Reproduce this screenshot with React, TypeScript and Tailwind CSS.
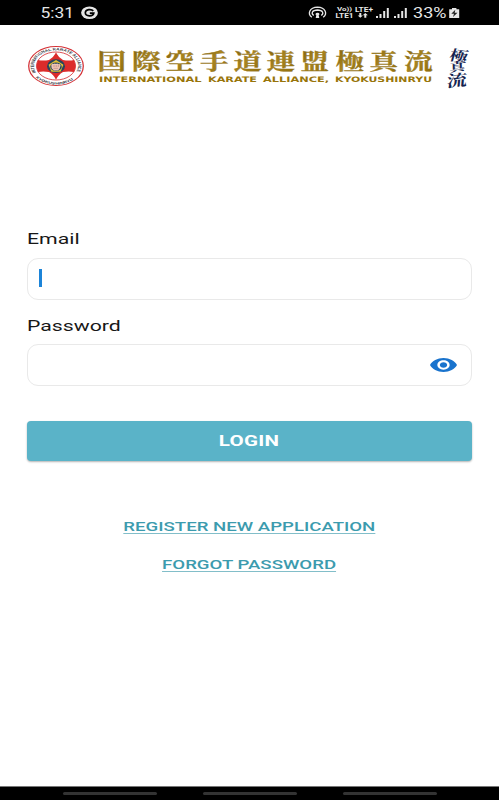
import React, { useState } from "react";

const kanji = ["国", "際", "空", "手", "道", "連", "盟", "極", "真", "流"];
const kanjiX = [97.5, 132, 165.5, 200, 233.5, 266.5, 300.5, 335.5, 369.5, 404];

function StatusBar() {
  return (
    <div className="flex h-[25px] w-full items-center bg-black">
      <svg className="h-[25px] w-full" viewBox="0 0 499 25" fontFamily="Roboto, sans-serif" fill="#e6e6e6">
        <text x="40.500" y="18" fontSize="14" textLength="33.500" lengthAdjust="spacingAndGlyphs">5:31</text>
        <ellipse cx="89.500" cy="12.800" rx="8.400" ry="6.300" />
        <path d="M93.300 10.900 C91.500 8.800 85.500 9 85.300 12.800 C85.500 16.800 93.200 16.800 93.800 13.100 H89.800" fill="none" stroke="#000" strokeWidth="1.700" />
        <g fill="none" stroke="#e6e6e6" strokeWidth="1.300">
          <path d="M311.800 17.300 C307.300 14 309.300 7.400 317.500 7.200 C325.700 7.400 327.700 14 323.200 17.300" />
          <path d="M313.700 15.600 C310.900 13.500 312 10.100 317.500 10 C323 10.100 324.100 13.500 321.300 15.600" />
        </g>
        <path d="M317.500 12.700c2.200 0 2.400 2 1.200 2.500l.6 2.800h-3.600l.6-2.800c-1.200-.5-1-2.500 1.200-2.500z" />
        <g fontWeight="700">
          <text x="337" y="11.400" fontSize="6" textLength="15" lengthAdjust="spacingAndGlyphs">Vo))</text>
          <text x="355" y="11.600" fontSize="6.500" textLength="18" lengthAdjust="spacingAndGlyphs">LTE+</text>
          <text x="335.500" y="18.200" fontSize="6.500" textLength="18" lengthAdjust="spacingAndGlyphs">LTE1</text>
        </g>
        <path d="M359.300 13h2v2.500h1.600l-2.600 2.300-2.600-2.300h1.600zM364.300 17.800v-2.500h-1.600l2.600-2.300 2.600 2.300h-1.600v2.500z" />
        <path d="M376 16h2v2h-2zM379.500 14h2v4h-2zM383.200 11h2v7h-2zM386.800 8h2v10h-2zM394 16h2v2h-2zM397.500 14h2v4h-2zM401.200 11h2v7h-2zM404.800 8h2v10h-2z" />
        <text x="413" y="18" fontSize="14" textLength="33.500" lengthAdjust="spacingAndGlyphs">33%</text>
        <path d="M452 8h4.400v1.300h2.800v8.700h-10V9.300h2.800z" />
        <path d="M455.300 9.800l-4 4h2.700l-1 3.200 4.500-4.300h-2.800z" fill="#222" />
      </svg>
    </div>
  );
}

function Brand() {
  return (
    <svg className="h-[55px] w-full" viewBox="0 40 499 55" role="img" aria-label="International Karate Alliance Kyokushinryu">
      <defs>
        <linearGradient id="gold" x1="0" y1="0" x2="1" y2="1">
          <stop offset="0" stopColor="#775b08" />
          <stop offset="0.5" stopColor="#a98520" />
          <stop offset="1" stopColor="#8a6808" />
        </linearGradient>
        <path id="arcTop" d="M-14.300 6.500 A15.700 15.700 0 1 1 14.300 6.500" />
        <path id="arcBottom" d="M-14.500 11.500 A18.500 18.500 0 0 0 14.500 11.500" />
      </defs>

      <g transform="translate(56 66) scale(1.4 1)">
        <circle r="19.500" fill="#fff" stroke="#d43136" strokeWidth="0.900" />
        <g fontFamily="Liberation Sans, sans-serif" fontWeight="700" fill="#30343d">
          <text fontSize="3.500"><textPath href="#arcTop" textLength="61" lengthAdjust="spacingAndGlyphs">INTERNATIONAL KARATE ALLIANCE</textPath></text>
          <text fontSize="3.200"><textPath href="#arcBottom" textLength="30" lengthAdjust="spacingAndGlyphs">KYOKUSHINRYU</textPath></text>
        </g>
        <circle r="14" fill="#fff" stroke="#d43136" strokeWidth="0.700" />
      </g>
      <path d="M56 52.300 Q58 57 63 60 Q69 61 74 60 Q76.500 66 74 72 Q69 71 63 72 Q58 75 56 79.700 Q54 75 49 72 Q43 71 38 72 Q35.500 66 38 60 Q43 61 49 60 Q54 57 56 52.300Z" fill="#dc2c2b" />
      <ellipse cx="56" cy="66.200" rx="9" ry="6.900" fill="#28445c" />
      <path d="M56 60 L63.400 64.800 L60.600 71.800 H51.400 L48.600 64.800Z" fill="#e5c332" />
      <ellipse cx="56" cy="66.700" rx="5.800" ry="4.300" fill="#2b4964" />
      <path d="M51.300 65 q1-2 2.300-.9 q1.200-1.300 2.400 0 q1.200-1.200 2.400.1 q1.700-.5 2.100 1.300 l-.8 2.900 -1.600 2 h-4.200 l-2.300-2.200z" fill="#efc5b6" />
      <path d="M54 65v2M56.200 65v2M58.300 65v2M53.500 68.300h4.500" stroke="#8d5353" strokeWidth="0.400" />

      <g fill="url(#gold)" stroke="#94751b" strokeWidth="0.300" fontFamily="Noto Serif CJK JP, Noto Sans CJK JP, serif" fontWeight="700" fontSize="21.500">
        {kanji.map((k, i) => (
          <text key={k} x={kanjiX[i]} y="69.200" textLength="28.500" lengthAdjust="spacingAndGlyphs">{k}</text>
        ))}
      </g>
      <g fill="#98750b" fontFamily="DejaVu Sans, sans-serif" fontWeight="700" fontSize="7.500">
        <text x="99" y="81.500" textLength="102.500" lengthAdjust="spacingAndGlyphs">INTERNATIONAL</text>
        <text x="208" y="81.500" textLength="49" lengthAdjust="spacingAndGlyphs">KARATE</text>
        <text x="263" y="81.500" textLength="66" lengthAdjust="spacingAndGlyphs">ALLIANCE,</text>
        <text x="335" y="81.500" textLength="97" lengthAdjust="spacingAndGlyphs">KYOKUSHINRYU</text>
      </g>
      <g fill="#14234f" fontFamily="Noto Serif CJK JP, Noto Sans CJK JP, serif" fontWeight="700">
        <text fontSize="14.500" transform="translate(448.500 59.800) rotate(8) skewX(-8)" textLength="18" lengthAdjust="spacingAndGlyphs">極</text>
        <text fontSize="12" transform="translate(449.500 72.500) rotate(-10) skewX(-8)" textLength="16" lengthAdjust="spacingAndGlyphs">真</text>
        <text fontSize="15.500" transform="translate(446.500 87) rotate(-5) skewX(-10)" textLength="20" lengthAdjust="spacingAndGlyphs">流</text>
      </g>
    </svg>
  );
}

function Label({ children, htmlFor }: { children: React.ReactNode; htmlFor: string }) {
  return (
    <label htmlFor={htmlFor} className="block h-[20px] w-fit origin-left scale-x-[1.37] text-[15.500px] leading-[20px] text-[#171717]">
      {children}
    </label>
  );
}

export default function App() {
  const [visible, setVisible] = useState(false);
  return (
    <div className="flex h-[800px] w-[499px] flex-col overflow-hidden bg-white font-[Roboto,sans-serif]">
      <StatusBar />
      <header className="mt-[15px] h-[55px]">
        <Brand />
      </header>

      <main className="mt-[134px] flex flex-1 flex-col px-[27px]">
        <Label htmlFor="email">Email</Label>
        <div className="mt-[9px] flex h-[42px] items-center rounded-[11px] border border-[#e9e9e9] pl-[11px]">
          <span className="mb-[3px] h-[18px] w-[2.500px] shrink-0 bg-[#1c84d8]" />
          <input id="email" className="h-full w-full bg-transparent px-1 outline-none" />
        </div>
        <div className="mt-[16px]">
          <Label htmlFor="password">Password</Label>
        </div>
        <div className="mt-[8px] flex h-[42px] items-center rounded-[11px] border border-[#e9e9e9] pr-[14px]">
          <input id="password" type={visible ? "text" : "password"} className="h-full w-full bg-transparent px-3 outline-none" />
          <button type="button" aria-label="Show password" onClick={() => setVisible(!visible)}>
            <svg className="h-[14px] w-[27px]" viewBox="1 4.500 22 15" preserveAspectRatio="none" fill="#1973cd">
              <path d="M12 4.500C7 4.500 2.730 7.610 1 12c1.730 4.390 6 7.500 11 7.500s9.270-3.110 11-7.500c-1.730-4.390-6-7.500-11-7.500zM12 17c-2.760 0-5-2.240-5-5s2.240-5 5-5 5 2.240 5 5-2.240 5-5 5zm0-8c-1.660 0-3 1.340-3 3s1.340 3 3 3 3-1.340 3-3-1.340-3-3-3z" />
            </svg>
          </button>
        </div>
        <button type="button" className="mt-[35px] flex h-[40px] shrink-0 items-center justify-center rounded-[4px] bg-[#5ab3c8] shadow-[0_1px_2px_rgba(0,0,0,0.3)]">
          <span className="inline-block scale-x-[1.370] text-[15px] font-bold leading-[20px] tracking-[0.200px] text-white">LOGIN</span>
        </button>
        <nav className="mt-[55px] flex flex-col items-center gap-[18px] text-[13.500px] font-medium leading-[20px] text-[#3c9bae]">
          <a className="scale-x-[1.380] underline decoration-[#82bec9] decoration-1 underline-offset-[2px]">REGISTER NEW APPLICATION</a>
          <a className="scale-x-[1.380] underline decoration-[#82bec9] decoration-1 underline-offset-[2px]">FORGOT PASSWORD</a>
        </nav>
      </main>

      <footer className="flex h-[14px] items-center justify-center gap-[46px] border-t border-[#777] bg-black">
        <span className="h-[3px] w-[94px] rounded-full bg-[#333]" />
        <span className="h-[3px] w-[94px] rounded-full bg-[#333]" />
        <span className="h-[3px] w-[94px] rounded-full bg-[#333]" />
      </footer>
    </div>
  );
}
